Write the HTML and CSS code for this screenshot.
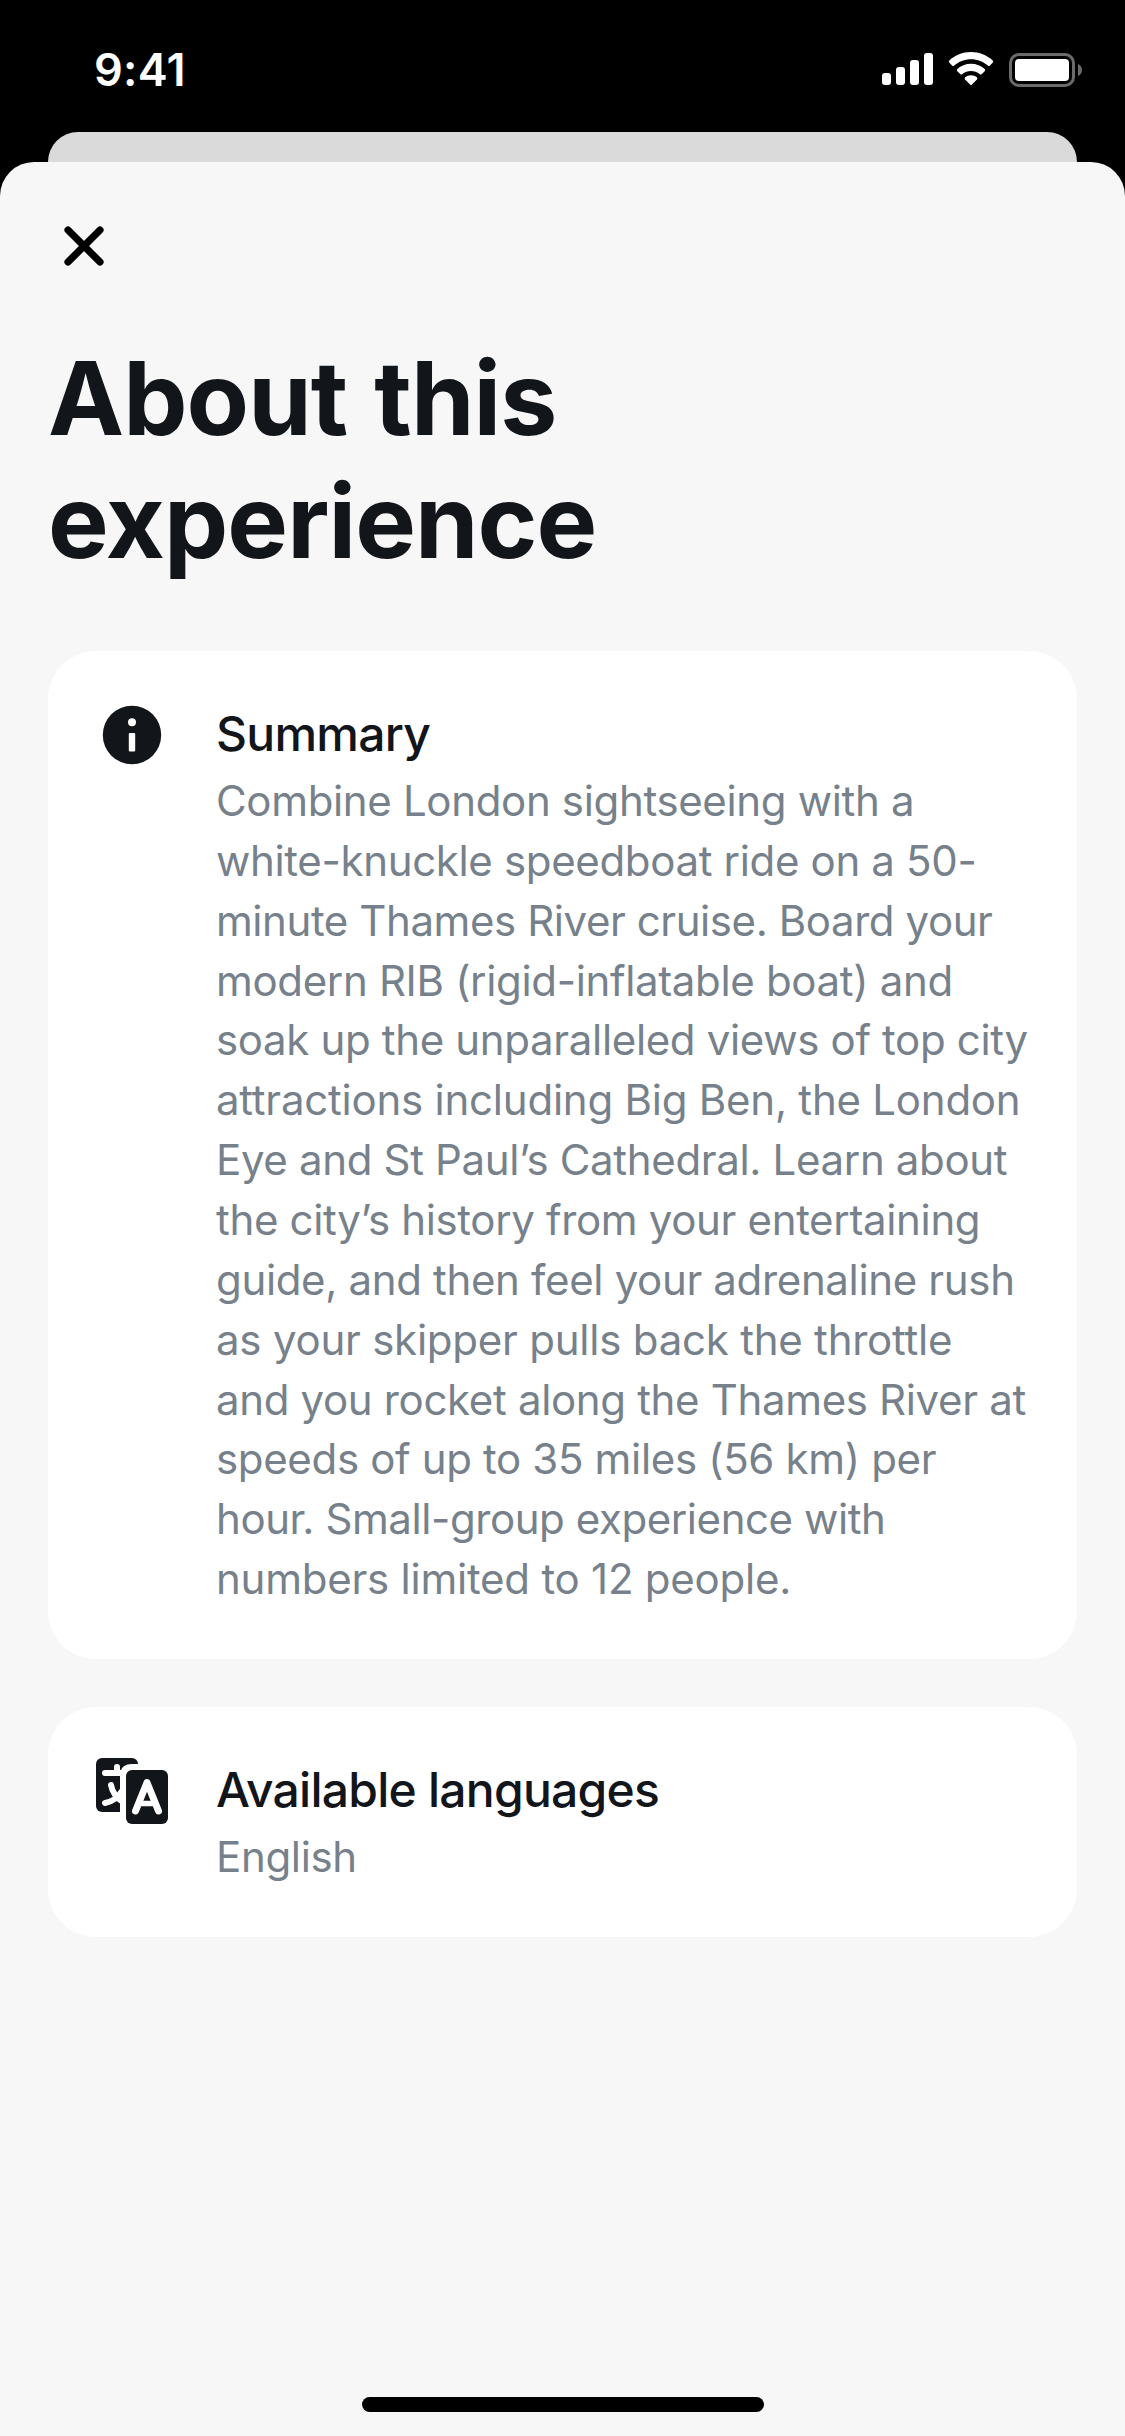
FILE: index.html
```html
<!DOCTYPE html>
<html lang="en">
<head>
<meta charset="utf-8">
<title>About this experience</title>
<link rel="stylesheet" href="styles.css">
</head>
<body>
<div class="screen">
  <header class="status-bar">
    <span class="time">9:41</span>
    <svg class="status-icons" width="204" height="40" viewBox="0 0 204 40" fill="#fff">
      <rect x="2" y="23" width="9" height="12" rx="3"/>
      <rect x="16" y="17" width="9" height="18" rx="3"/>
      <rect x="30" y="10" width="9" height="25" rx="3"/>
      <rect x="44" y="3" width="9" height="32" rx="3"/>
      <path d="M91 2C82.500 2 75 5.300 69.300 10.400Q68.200 11.400 69.200 12.500L72 15.500Q73.100 16.500 74.200 15.500C78.700 11.500 84.500 9.200 91 9.200S103.300 11.500 107.800 15.500Q108.900 16.500 110 15.500L112.800 12.500Q113.800 11.400 112.700 10.400C107 5.300 99.500 2 91 2Z"/>
      <path d="M91 13.800C85.700 13.800 80.900 15.800 77.300 19.100Q76.300 20.100 77.300 21.200L80.200 24Q81.300 25 82.400 24C84.700 22 87.700 20.900 91 20.900S97.300 22 99.600 24Q100.700 25 101.800 24L104.700 21.200Q105.700 20.100 104.700 19.100C101.100 15.800 96.300 13.800 91 13.800Z"/>
      <path d="M91 25.300C88.700 25.300 86.700 26 85.100 27.300Q84.100 28.300 85.100 29.400L90 34.500Q91 35.500 92 34.500L96.900 29.400Q97.900 28.300 96.900 27.300C95.300 26 93.300 25.300 91 25.300Z"/>
      <rect x="130.500" y="4.500" width="63" height="31" rx="8.500" fill="none" stroke="#6b6b6b" stroke-width="3"/>
      <rect x="135" y="9" width="54" height="22" rx="4"/>
      <path d="M198 14Q202 15.800 202 20T198 26Z" fill="#6b6b6b"/>
    </svg>
  </header>
  <div class="previous-page"></div>
  <main class="sheet">
    <button class="close" aria-label="Close">
      <svg width="44" height="44" viewBox="0 0 44 44" fill="none" stroke="#000" stroke-width="7.200" stroke-linecap="round"><path d="M6 6L38 38M38 6L6 38"/></svg>
    </button>
    <h1 class="title">About this<br>experience</h1>
    <section class="card">
      <svg class="card-icon info" width="72" height="72" viewBox="0 0 72 72">
        <circle cx="36" cy="36" r="29.200" fill="#12151a"/>
        <circle cx="36" cy="23.300" r="4" fill="#fff"/>
        <rect x="32.800" y="34" width="6.400" height="18.500" rx="1" fill="#fff"/>
      </svg>
      <div class="card-text">
        <h2 class="card-title">Summary</h2>
        <p class="card-body">Combine London sightseeing with a<br>white-knuckle speedboat ride on a 50-<br><span class="tight">minute Thames River cruise. Board your</span><br>modern RIB (rigid-inflatable boat) and<br>soak up the unparalleled views of top city<br><span class="loose">attractions including Big Ben, the London</span><br>Eye and St Paul’s Cathedral. Learn about<br>the city’s history from your entertaining<br>guide, and then feel your adrenaline rush<br><span class="loose">as your skipper pulls back the throttle</span><br>and you rocket along the Thames River at<br>speeds of up to 35 miles (56 km) per<br><span class="tight">hour. Small-group experience with</span><br><span class="loose">numbers limited to 12 people.</span></p>
      </div>
    </section>
    <section class="card">
      <svg class="card-icon" width="72" height="72" viewBox="0 0 72 72" fill="none" stroke-linecap="round" stroke-linejoin="round">
        <rect x="0" y="0" width="42" height="54" rx="6" fill="#12151a"/>
        <path d="M9 15H32M21 9V15M15 27Q17 38 27 44M9 45Q20 43 26 33" stroke="#fff" stroke-width="6"/>
        <path d="M24 66V18Q24 6 36 6H78V66Z" fill="#fff"/>
        <rect x="30" y="12" width="42" height="54" rx="6" fill="#12151a"/>
        <path d="M39.500 53L51 24.500L62.500 53" stroke="#fff" stroke-width="7"/>
        <path d="M44 45.500H58" stroke="#fff" stroke-width="5.500"/>
      </svg>
      <div class="card-text">
        <h2 class="card-title">Available languages</h2>
        <p class="card-body">English</p>
      </div>
    </section>
    <div class="home-indicator"></div>
  </main>
</div>
</body>
</html>
```
FILE: styles.css
```css
* { box-sizing: border-box; }
body { margin: 0; background: #000; font-family: Inter, "Liberation Sans", sans-serif; color: #12151a; }
h1, h2, p { margin: 0; }
svg { display: block; flex: none; }

.screen { display: flex; flex-direction: column; width: 1125px; height: 2436px; overflow: hidden; background: #000; }
.status-bar { display: flex; justify-content: space-between; height: 132px; padding: 50px 41px 0 94px; color: #fff; }
.time { font-size: 45px; line-height: 39px; font-weight: 600; letter-spacing: .3px; }
.previous-page { height: 30px; margin: 0 48px; border-radius: 30px 30px 0 0; background: #dadada; }

.sheet { display: flex; flex-direction: column; flex: 1; padding: 62px 48px 24px; border-radius: 34px 34px 0 0; background: #f7f7f7; }
.close { align-self: flex-start; margin-left: 14px; padding: 0; border: 0; background: none; }
.title { margin: 69px 0 68px; font-size: 102px; line-height: 123px; font-weight: 700; letter-spacing: -.95px; word-spacing: 4px; }

.card { display: flex; gap: 48px; margin-bottom: 48px; padding: 48px 48px 50px; border-radius: 48px; background: #fff; }
.card-icon { margin-top: 3px; overflow: hidden; }
.card-icon.info { margin-top: 0; }
.card-text { flex: 1; min-width: 0; white-space: nowrap; }
.card-title { padding-top: 5px; font-size: 48px; line-height: 60px; font-weight: 500; letter-spacing: -.75px; }
.card-body { margin-top: 7px; font-size: 42px; line-height: 59.860px; letter-spacing: -.34px; color: #77818b; }
.tight { letter-spacing: -.42px; }
.loose { letter-spacing: -.23px; }

.home-indicator { align-self: center; width: 402px; height: 15px; margin-top: auto; border-radius: 8px; background: #000; }
```
